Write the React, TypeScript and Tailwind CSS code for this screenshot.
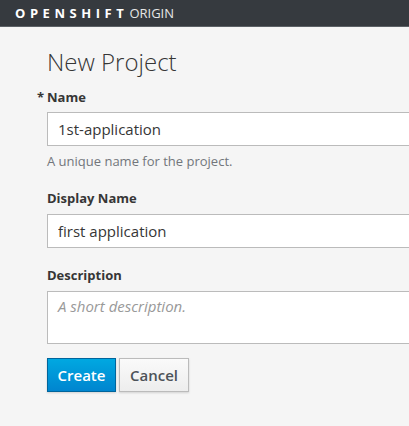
export default function App() {
  return (
    <div
      className="min-h-screen w-[409px] h-[426px] overflow-hidden bg-[#f5f5f5] text-[#363636]"
      style={{ fontFamily: '"Open Sans", sans-serif' }}
    >
      <header className="h-[27px] bg-[#363a3f] border-b border-[#5c6166] flex items-center pl-[15px]">
        <span className="text-[13px] font-bold text-white tracking-[0.35em] leading-none">OPENSHIFT</span>
        <span className="text-[13px] font-normal text-[#e6e6e6] leading-none ml-[1px]">ORIGIN</span>
      </header>

      <main className="pl-[47px] pt-[20px]">
        <h1 className="text-[24px] font-light leading-[30px] text-[#363636]">New Project</h1>

        <form className="mt-[11px] w-[420px]" onSubmit={(e) => e.preventDefault()}>
          <div>
            <label className="relative block text-[13px] font-bold leading-[18px]">
              <span className="absolute -left-[10px] top-0">*</span>
              Name
            </label>
            <input
              type="text"
              defaultValue="1st-application"
              className="mt-[6px] w-full h-[34px] bg-white border border-[#bbbbbb] px-[10px] text-[15px] text-[#363636] outline-none"
            />
            <p className="mt-[6px] text-[13px] leading-[18px] text-[#72767b]">A unique name for the project.</p>
          </div>

          <div className="mt-[19px]">
            <label className="block text-[13px] font-bold leading-[18px]">Display Name</label>
            <input
              type="text"
              defaultValue="first application"
              className="mt-[7px] w-full h-[34px] bg-white border border-[#bbbbbb] px-[10px] text-[15px] text-[#363636] outline-none"
            />
          </div>

          <div className="mt-[18px]">
            <label className="block text-[13px] font-bold leading-[18px]">Description</label>
            <textarea
              placeholder="A short description."
              className="mt-[7px] block w-full h-[53px] bg-white border border-[#bbbbbb] px-[10px] py-[3px] text-[15px] text-[#363636] italic placeholder:text-[#999999] outline-none resize-none"
            />
          </div>

          <div className="mt-[14px] flex gap-[3px]">
            <button
              type="submit"
              className="h-[34px] w-[69px] text-[15px] font-semibold text-white border border-[#00659c] bg-gradient-to-b from-[#00a8e1] to-[#0085cf] shadow-[0_1px_2px_rgba(0,0,0,0.15)]"
            >
              Create
            </button>
            <button
              type="button"
              className="h-[34px] w-[70px] text-[15px] font-semibold text-[#4d5258] border border-[#bbbbbb] bg-gradient-to-b from-[#fafafa] to-[#ededed] shadow-[0_1px_2px_rgba(0,0,0,0.15)]"
            >
              Cancel
            </button>
          </div>
        </form>
      </main>
    </div>
  );
}
